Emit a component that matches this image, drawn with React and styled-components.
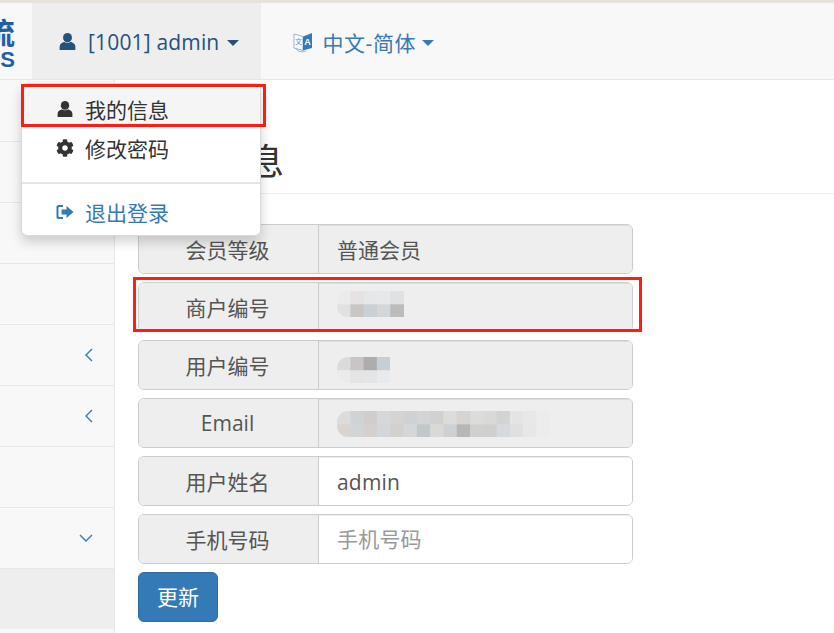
import React from 'react';
import styled, { createGlobalStyle } from 'styled-components';
import { FaCog } from 'react-icons/fa';

const Global = createGlobalStyle`
  html, body {
    margin: 0;
    height: 633px;
    overflow: hidden;
    background: #fff;
  }
  body {
    font-family: "Open Sans", "Noto Sans CJK SC", sans-serif;
    font-size: 21px;
    color: #555;
  }
`

const Page = styled.div`
  position: relative;
  width: 834px;
  height: 633px;
  overflow: hidden;
  border-top: 3px solid #e7e3dc;
  box-sizing: border-box;
`

// top navbar
const Navbar = styled.div`
  display: flex;
  height: 77px;
  box-sizing: border-box;
  background: #f8f8f8;
  border-bottom: 1px solid #e7e7e7;
`
const Logo = styled.div`
  width: 32px;
  padding-right: 17px;
  box-sizing: border-box;
  overflow: hidden;
  display: flex;
  flex-direction: column;
  align-items: flex-end;
  color: #1f5fa3;
  font-weight: 700;
  line-height: 1;
  padding-top: 15px;
`
const LogoTop = styled.span`
  font-size: 30px;
  white-space: nowrap;
  height: 31px;
`
const LogoBottom = styled.span`
  font-size: 22px;
  font-family: "Liberation Sans", sans-serif;
`
const NavItem = styled.div`
  display: flex;
  align-items: center;
  height: 76px;
  box-sizing: border-box;
  padding: 1px ${p => p.$pad}px 0 ${p => p.$padLeft}px;
  color: ${p => p.$active ? '#23527c' : '#337ab7'};
  background: ${p => p.$active ? '#eee' : 'transparent'};
  white-space: nowrap;
`
const NavLabel = styled.span`
  margin-left: ${p => p.$gap}px;
  letter-spacing: ${p => p.$spacing}px;
`
const Caret = styled.span`
  display: inline-block;
  margin-left: ${p => p.$gap}px;
  margin-top: 2px;
  border-top: 6.5px solid currentColor;
  border-left: 6.5px solid transparent;
  border-right: 6.5px solid transparent;
`

// sidebar + content
const Body = styled.div`
  display: flex;
  height: 553px;
`
const Sidebar = styled.div`
  width: 115px;
  flex: none;
  box-sizing: border-box;
  padding-top: 1px;
  background: #f8f8f8;
  border-right: 1px solid #e7e7e7;
`
const SideRow = styled.div`
  height: ${p => p.$active ? 60 : 61}px;
  box-sizing: border-box;
  display: flex;
  align-items: center;
  justify-content: flex-end;
  padding-right: 21px;
  border-bottom: ${p => p.$active ? 'none' : '1px solid #e7e7e7'};
  background: ${p => p.$active ? '#eee' : 'transparent'};
`
const ChevronArt = styled.svg`
  transform: ${p => p.$down ? 'rotate(-90deg)' : 'none'};
  margin-right: ${p => p.$down ? 3 : 0}px;
`
const Main = styled.div`
  flex: 1;
  min-width: 0;
`
const PageHeader = styled.div`
  height: 114px;
  box-sizing: border-box;
  padding: 60px 0 0 25px;
  border-bottom: 1px solid #eee;
`
const Title = styled.h1`
  margin: 0;
  font-size: 36px;
  line-height: 44px;
  font-weight: 400;
  color: #333;
`
const Form = styled.div`
  margin: 30px 0 0 23px;
  width: 495px;
  display: flex;
  flex-direction: column;
  gap: 8px;
  align-items: flex-start;
`
const Field = styled.div`
  display: flex;
  width: 100%;
  height: 50px;
  box-sizing: border-box;
  border: 1px solid #ccc;
  border-radius: 6px;
  overflow: hidden;
`
const FieldLabel = styled.div`
  width: 180px;
  flex: none;
  box-sizing: border-box;
  padding-right: 2px;
  background: #eee;
  border-right: 1px solid #ccc;
  display: flex;
  align-items: center;
  justify-content: center;
  color: #555;
`
const Static = styled.div`
  flex: 1;
  display: flex;
  align-items: center;
  padding-left: 18px;
  background: #eee;
  color: #555;
  box-shadow: inset 0 1px 1px rgba(0, 0, 0, .075);
`
const Input = styled.input`
  flex: 1;
  min-width: 0;
  padding: ${p => p.$nudge}px 0 0 18px;
  border: none;
  outline: none;
  background: #fff;
  color: #555;
  font: inherit;
  letter-spacing: .2px;
  box-shadow: inset 0 1px 1px rgba(0, 0, 0, .075);
  &::placeholder {
    color: #999;
    opacity: 1;
  }
`
const SaveButton = styled.button`
  width: 80px;
  height: 50px;
  padding: 0 0 2px;
  border: 1px solid #2e6da4;
  border-radius: 6px;
  background: #337ab7;
  color: #fff;
  font: inherit;
`

// open dropdown
const Dropdown = styled.div`
  position: absolute;
  left: 21px;
  top: 80px;
  width: 240px;
  height: 153px;
  box-sizing: border-box;
  padding-top: 5px;
  background: #fff;
  border: 1px solid rgba(0, 0, 0, .15);
  border-radius: 6px;
  box-shadow: 0 6px 12px rgba(0, 0, 0, .175);
`
const MenuItem = styled.div`
  display: flex;
  align-items: center;
  height: 39px;
  padding-left: ${p => p.$padLeft || 35}px;
  gap: ${p => p.$gap || 12}px;
  color: ${p => p.$link ? '#337ab7' : '#333'};
  background: ${p => p.$active ? '#f5f5f5' : 'transparent'};
`
const MenuDivider = styled.div`
  height: 2px;
  margin: 15px 0 8px;
  background: #e5e5e5;
`
const CogIcon = styled(FaCog)`
  margin: 0 -1px;
  color: #333;
`

// red annotation boxes
const RedBox = styled.div`
  position: absolute;
  left: ${p => p.$x}px;
  top: ${p => p.$y}px;
  width: ${p => p.$w}px;
  height: ${p => p.$h}px;
  box-sizing: border-box;
  border: 3px solid #ff1c12;
`
const MosaicArt = styled.svg`
  border-radius: 11px 0 0 11px;
  transform: translateY(${p => p.$dy}px);
`

const UserIcon = ({ size, color }) => (
  <svg width={size} height={size} viewBox="0 0 16 16" fill={color}>
    <ellipse cx="8" cy="4.4" rx="4.2" ry="4.4" />
    <path d="M.6 16 V12.6 C.6 10.2 3 9 5 8.2 C6 9.6 10 9.6 11 8.2 C13 9 15.4 10.2 15.4 12.6 V16 Z" />
  </svg>
)

const LogoutIcon = () => (
  <svg width="18" height="16" viewBox="0 0 18 16" fill="#337ab7">
    <path d="M2.5 1 H7 V3 H3.5 C3 3 2.5 3.4 2.5 4 V12 C2.5 12.6 3 13 3.5 13 H7 V15 H2.5 C1.2 15 .5 14 .5 13 V3 C.5 2 1.2 1 2.5 1 Z" />
    <path d="M10.5 2 L17.5 8 L10.5 14 V10.6 H5.5 V5.4 H10.5 Z" />
  </svg>
)

const LangIcon = () => (
  <svg width="20" height="22" viewBox="0 0 20 22">
    <path d="M1 3 L10 5.5 V19.5 L1 17 Z" fill="#fff" stroke="#8fb4d8" strokeWidth="1" />
    <path d="M10 5.5 L19 2 V17 L10 19.5 Z" fill="#337ab7" />
    <path d="M3 17.5 C5 21 9 21.5 13 20" fill="none" stroke="#8fb4d8" strokeWidth="1" />
    <text x="14.5" y="14" fontSize="9" fontWeight="700" fill="#fff" textAnchor="middle" fontFamily="Liberation Sans">A</text>
    <text x="5.5" y="12.5" fontSize="7" fill="#5a8fc0" textAnchor="middle" fontFamily="Noto Sans CJK SC">文</text>
  </svg>
)

const Chevron = ({ down }) => (
  <ChevronArt $down={down} width="8" height="14" viewBox="0 0 8 14">
    <path d="M7 1 L1 7 L7 13" fill="none" stroke="#337ab7" strokeWidth="1.4" />
  </ChevronArt>
)

// pixelated privacy smear over the hidden values, one list of cell colours per row
const Mosaic = ({ rows, dy }) => {
  const size = 13.3
  const width = rows[0].length * size
  const height = rows.length * size
  return (
    <MosaicArt $dy={dy} width={width} height={height} viewBox={`0 0 ${width} ${height}`}>
      {rows.map((row, r) => row.map((c, i) => (
        <rect key={`${r}-${i}`} x={i * size} y={r * size} width={size + .5} height={size + .5} fill={c} />
      )))}
    </MosaicArt>
  )
}

const merchantCells = [
  ['#ebebeb', '#e5e2e1', '#e6e7e8', '#e7e8e9', '#e0e1e3'],
  ['#e2e1e1', '#cac6c5', '#c9d1d6', '#d3d7da', '#bcbcbc'],
]
const userCells = [
  ['#dcdbdb', '#c9c5c5', '#adadad', '#c8ced6'],
  ['#ebebeb', '#e4e4e5', '#e4e5e6', '#e8eaec'],
]
const emailCells = [
  ['#dedcda', '#d0d3d6', '#d0cdcd', '#d5d7da', '#d5d4d2', '#cfd2d3', '#d2d4d6', '#d0d1d1', '#dddcda', '#d6d3d3', '#dcdcdc', '#dad9d7', '#d2d4d4', '#e4e4e4', '#e8e8e8', '#ececec'],
  ['#d9d4d0', '#d2d5d8', '#d5cfcf', '#d3d6da', '#d2d1cf', '#d4d7d9', '#c2c7c9', '#d9d9d5', '#cdd1d3', '#b9b6b6', '#d0d0ce', '#cfcfcd', '#d6dadc', '#dfe0e1', '#e6e7e8', '#ececec'],
]

const App = () => {
  return (
    <Page>
      <Global />
      <Navbar>
        <Logo>
          <LogoTop>流</LogoTop>
          <LogoBottom>S</LogoBottom>
        </Logo>
        <NavItem $active $padLeft={27} $pad={22}>
          <UserIcon size={17} color="#23527c" />
          <NavLabel $gap={12} $spacing={.17}>[1001] admin</NavLabel>
          <Caret $gap={8} />
        </NavItem>
        <NavItem $padLeft={32} $pad={0}>
          <LangIcon />
          <NavLabel $gap={9} $spacing={.6}>中文-简体</NavLabel>
          <Caret $gap={6} />
        </NavItem>
      </Navbar>
      <Body>
        <Sidebar>
          <SideRow />
          <SideRow />
          <SideRow />
          <SideRow />
          <SideRow><Chevron /></SideRow>
          <SideRow><Chevron /></SideRow>
          <SideRow />
          <SideRow><Chevron down /></SideRow>
          <SideRow $active />
        </Sidebar>
        <Main>
          <PageHeader>
            <Title>我的信息</Title>
          </PageHeader>
          <Form>
            <Field>
              <FieldLabel>会员等级</FieldLabel>
              <Static>普通会员</Static>
            </Field>
            <Field>
              <FieldLabel>商户编号</FieldLabel>
              <Static><Mosaic rows={merchantCells} dy={-3} /></Static>
            </Field>
            <Field>
              <FieldLabel>用户编号</FieldLabel>
              <Static><Mosaic rows={userCells} dy={5} /></Static>
            </Field>
            <Field>
              <FieldLabel>Email</FieldLabel>
              <Static><Mosaic rows={emailCells} dy={1} /></Static>
            </Field>
            <Field>
              <FieldLabel>用户姓名</FieldLabel>
              <Input $nudge={1} defaultValue="admin" />
            </Field>
            <Field>
              <FieldLabel>手机号码</FieldLabel>
              <Input $nudge={0} placeholder="手机号码" />
            </Field>
            <SaveButton>更新</SaveButton>
          </Form>
        </Main>
      </Body>
      <Dropdown>
        <MenuItem $active $gap={12}>
          <UserIcon size={16} color="#333" />
          <span>我的信息</span>
        </MenuItem>
        <MenuItem>
          <CogIcon size={18} />
          <span>修改密码</span>
        </MenuItem>
        <MenuDivider />
        <MenuItem $link $padLeft={34} $gap={11}>
          <LogoutIcon />
          <span>退出登录</span>
        </MenuItem>
      </Dropdown>
      <RedBox $x={21} $y={81} $w={245} $h={43} />
      <RedBox $x={133} $y={274} $w={509} $h={55} />
    </Page>
  )
}

export default App;
